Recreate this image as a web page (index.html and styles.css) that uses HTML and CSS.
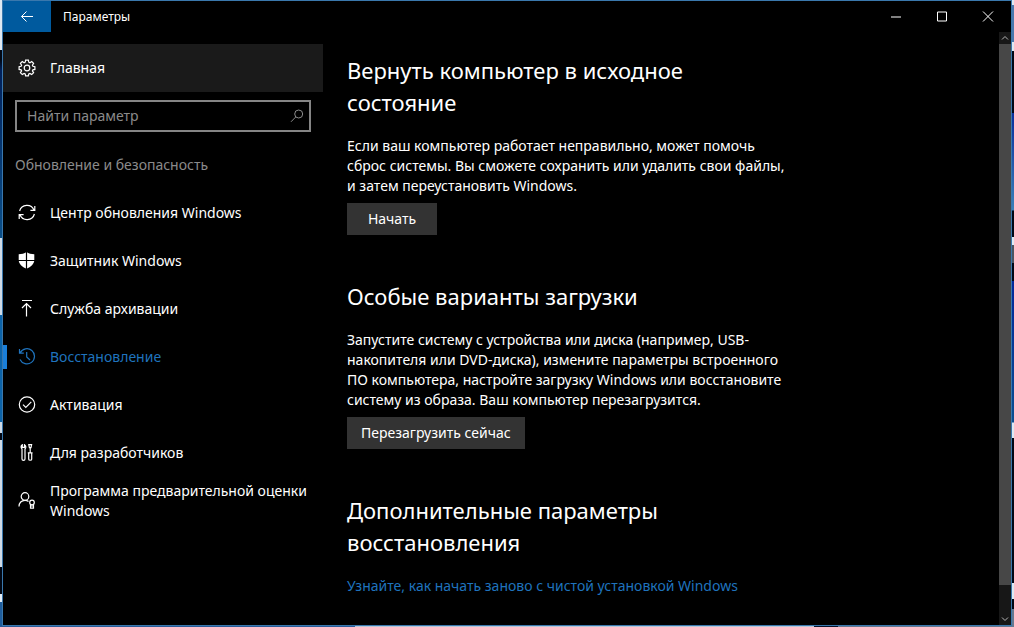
FILE: index.html
```html
<!DOCTYPE html>
<html lang="ru">
<head>
  <meta charset="UTF-8" />
  <meta name="viewport" content="width=device-width, initial-scale=1.0" />
  <title>Параметры</title>
  <link rel="stylesheet" href="styles.css">
</head>
<body>
  <div class="window">
    <header class="titlebar">
      <button class="back" type="button" aria-label="Назад">
        <svg width="14" height="12" viewBox="0 0 14 12"><path d="M1.5 5.5H13M6.5 .5l-5 5 5 5" /></svg>
      </button>
      <span class="title">Параметры</span>
      <div class="controls">
        <button type="button" aria-label="Свернуть">
          <svg width="12" height="12" viewBox="0 0 12 12"><path d="M1 6h10" /></svg>
        </button>
        <button type="button" aria-label="Развернуть">
          <svg width="12" height="12" viewBox="0 0 12 12"><path d="M1.5 1h9v9h-9z" /></svg>
        </button>
        <button type="button" aria-label="Закрыть">
          <svg width="12" height="12" viewBox="0 0 12 12"><path d="M1 .5l10 10M11 .5l-10 10" /></svg>
        </button>
      </div>
    </header>

    <div class="layout">
      <nav class="sidebar">
        <a class="item home" href="#">
          <svg class="icon" viewBox="0 0 18 18">
            <path d="M7.6 1.2h2.8l.4 2 1.1.5 1.8-1.2 1.9 1.9-1.2 1.8.5 1.1 2 .4v2.7l-2 .4-.5 1.1 1.2 1.8-1.9 1.9-1.8-1.2-1.1.5-.4 2H7.6l-.4-2-1.1-.5-1.8 1.2-1.9-1.9 1.2-1.8-.5-1.1-2-.4V7.7l2-.4.5-1.1-1.2-1.8 1.9-1.9 1.8 1.2 1.1-.5z" />
            <circle cx="9" cy="9" r="2.8" />
          </svg>
          <span>Главная</span>
        </a>

        <form class="search">
          <input type="text" id="search" placeholder="Найти параметр" aria-label="Найти параметр" />
          <svg width="14" height="14" viewBox="0 0 14 14"><circle cx="8.7" cy="5" r="4" /><path d="M5.8 7.9L1 12.8" /></svg>
        </form>

        <h2 class="group">Обновление и безопасность</h2>

        <a class="item" href="#">
          <svg class="icon" viewBox="0 0 18 18"><path d="M1.6 7A7.6 7.6 0 0 1 16 6.2M16.8 2v4.4h-4.4M16.4 10A7.6 7.6 0 0 1 2 10.8M1.2 15v-4.4h4.4" /></svg>
          <span>Центр обновления Windows</span>
        </a>
        <a class="item" href="#">
          <svg class="icon" viewBox="0 0 18 18">
            <path class="solid" d="M8.5 0c2 1.6 5 2.2 7.8 2.2V8c0 4-3.5 7-7.8 8.8C4.2 15 .7 12 .7 8V2.2C3.5 2.2 6.5 1.600 8.500 0z" />
            <path class="cut" d="M8.5 0v17M0 8.5h17" />
          </svg>
          <span>Защитник Windows</span>
        </a>
        <a class="item" href="#">
          <svg class="icon" viewBox="0 0 18 18"><path d="M4 .5h10M8.5 16.5v-13M4 8l4.500-4.500L13 8" /></svg>
          <span>Служба архивации</span>
        </a>
        <a class="item active" href="#">
          <svg class="icon" viewBox="0 0 18 18"><path d="M2.2 4.700A7.600 7.600 0 1 1 2 11.500M1.500 1v4.200h4.300M8.700 4v5l3.300 3" /></svg>
          <span>Восстановление</span>
        </a>
        <a class="item" href="#">
          <svg class="icon" viewBox="0 0 18 18"><circle cx="9" cy="8.5" r="7.7" /><path d="M5 8.7l2.800 2.800 5.500-5.600" /></svg>
          <span>Активация</span>
        </a>
        <a class="item" href="#">
          <svg class="icon" viewBox="0 0 18 18">
            <path d="M4.3.7v2.600h2.200V.7c1 .6 1.500 1.800 1.200 3L7 5v10c0 1.800-3 1.800-3 0V5l-.8-1.300c-.3-1.200.1-2.400 1.100-3z" />
            <path d="M10.8.7h2.800l-.6 3h-1.600zM12.200 3.700v5M9.800 8.800h4.800M10.700 8.800h3v6.400c0 1.400-3 1.400-3 0z" />
          </svg>
          <span>Для разработчиков</span>
        </a>
        <a class="item" href="#">
          <svg class="icon" viewBox="0 0 18 18">
            <circle cx="7" cy="4.5" r="3.8" />
            <path d="M1 14.500C1 10.800 3.500 8.300 7 8.300c1.500 0 2.600.4 3.500 1.200" />
            <circle cx="14" cy="10.5" r="2.3" />
            <path d="M12.5 12.500v3.700h3v-3.700M12.500 14h3" />
          </svg>
          <span>Программа предварительной оценки Windows</span>
        </a>
      </nav>

      <main class="content">
        <section>
          <h1>Вернуть компьютер в исходное состояние</h1>
          <p>Если ваш компьютер работает неправильно, может помочь сброс системы. Вы сможете сохранить или удалить свои файлы, и затем переустановить Windows.</p>
          <button class="btn" type="button">Начать</button>
        </section>
        <section>
          <h1>Особые варианты загрузки</h1>
          <p>Запустите систему с устройства или диска (например, USB-накопителя или DVD-диска), измените параметры встроенного ПО компьютера, настройте загрузку Windows или восстановите систему из образа. Ваш компьютер перезагрузится.</p>
          <button class="btn" type="button">Перезагрузить сейчас</button>
        </section>
        <section>
          <h1>Дополнительные параметры восстановления</h1>
          <a class="link" href="#">Узнайте, как начать заново с чистой установкой Windows</a>
        </section>
      </main>

      <div class="scrollbar" aria-hidden="true">
        <svg width="12" height="12" viewBox="0 0 12 12"><path d="M3 7.5l3-3 3 3" /></svg>
        <div class="track"><div class="thumb"></div></div>
        <svg width="12" height="12" viewBox="0 0 12 12"><path d="M3 4.5l3 3 3-3" /></svg>
      </div>
    </div>
  </div>
</body>
</html>
```
FILE: styles.css
```css
:root {
  --bg: #000000;
  --text: #ffffff;
  --muted: #8b8b8b;
  --accent: #1f73bd;
  --frame: #3a78ad;
}

* {
  box-sizing: border-box;
}

/* desktop behind the window shows as a thin edge */
body {
  margin: 0;
  min-height: 100vh;
  display: flex;
  padding: 0 2px 1px;
  font-family: "Segoe UI", "Noto Sans", sans-serif;
  font-size: 14px;
  line-height: 20px;
  color: var(--text);
  background-color: #0b1a30;
  background-image:
    linear-gradient(to right, #2a5c98 355px, #b9c6d6 355px 814px, #06122a 814px 838px, #66788f 838px),
    linear-gradient(#dfe9f2 50px, #020814 50px 60px, #01205a 70px, #0b4f88 238px, #cfdae6 238px 315px, #0c63a8 315px 422px, #cfdae6 422px 433px, #020814 433px 440px, #cfdae6 440px 567px, #020814 567px 594px, #e3ecf5 594px 602px, #1f5d9c 602px),
    linear-gradient(#dfe9f2 5px, #4a78ac 5px 42px, #dfe9f2 42px 51px, #020814 51px 113px, #0a2f9c 113px, #3a80b8 210px, #020814 211px 237px, #dfe9f2 237px 245px, #4c5560 245px 263px, #020814 263px 281px, #02289a 281px, #0b4f90 422px, #dfe9f2 423px 438px, #020814 438px 583px, #dfe9f2 583px 599px, #020814 599px 609px, #66788f 609px);
  background-size: 100% 1px, 2px 100%, 2px 100%;
  background-position: left bottom, left top, right top;
  background-repeat: no-repeat;
}

.window {
  flex: 1;
  display: flex;
  flex-direction: column;
  background: var(--bg);
  border: 1px solid var(--frame);
}

svg {
  flex: none;
  fill: none;
  stroke: currentColor;
}

button {
  border: none;
  font: inherit;
  color: inherit;
  cursor: pointer;
}

a {
  color: inherit;
  text-decoration: none;
}

/* title bar */
.titlebar {
  display: flex;
  align-items: center;
  height: 31px;
}

.back {
  display: flex;
  align-items: center;
  justify-content: center;
  width: 48px;
  height: 31px;
  background: #005a9e;
}

.title {
  padding-left: 12px;
  font-size: 12px;
}

.controls {
  display: flex;
  margin-left: auto;
}

.controls button {
  display: flex;
  align-items: center;
  justify-content: center;
  width: 46px;
  height: 31px;
  padding: 0;
  background: transparent;
}

.layout {
  flex: 1;
  display: flex;
}

/* left menu */
.sidebar {
  width: 320px;
  flex: none;
  padding-top: 12px;
}

.item {
  display: flex;
  align-items: center;
  gap: 14px;
  min-height: 48px;
  padding: 0 8px 0 15px;
}

.home {
  background: #1a1a1a;
}

.icon {
  width: 18px;
  height: 18px;
  stroke-width: 1.2;
}

.solid {
  fill: currentColor;
  stroke: none;
}

.cut {
  stroke: var(--bg);
}

.active {
  color: var(--accent);
  background: linear-gradient(#1a7fd9, #1a7fd9) left center / 4px 24px no-repeat;
}

.search {
  display: flex;
  align-items: center;
  height: 32px;
  margin: 8px 12px 0;
  padding: 0 5px 0 10px;
  border: 2px solid #858585;
  color: var(--muted);
}

.search input {
  flex: 1;
  min-width: 0;
  padding: 0;
  border: none;
  outline: none;
  background: transparent;
  font: inherit;
  color: var(--text);
}

.search input::placeholder {
  color: var(--muted);
  opacity: 1;
}

.group {
  margin: 23px 12px 14px;
  font-size: 14px;
  font-weight: 400;
  color: var(--muted);
}

/* page */
.content {
  flex: 1;
  padding: 22px 24px 28px;
}

.content section {
  max-width: 448px;
  margin-bottom: 45px;
}

.content section:last-child {
  margin-bottom: 0;
}

h1 {
  max-width: 400px;
  margin: 0 0 18px;
  font-size: 22px;
  font-weight: 400;
  line-height: 32px;
}

p {
  margin: 0 0 7px;
}

.btn {
  min-width: 90px;
  height: 32px;
  padding: 0 14px;
  background: #333333;
}

.link {
  color: var(--accent);
}

/* scrollbar */
.scrollbar {
  display: flex;
  flex-direction: column;
  width: 12px;
  background: #171717;
  color: #b5b5b5;
}

.track {
  flex: 1;
}

.thumb {
  height: 95%;
  background: #474747;
}
```
